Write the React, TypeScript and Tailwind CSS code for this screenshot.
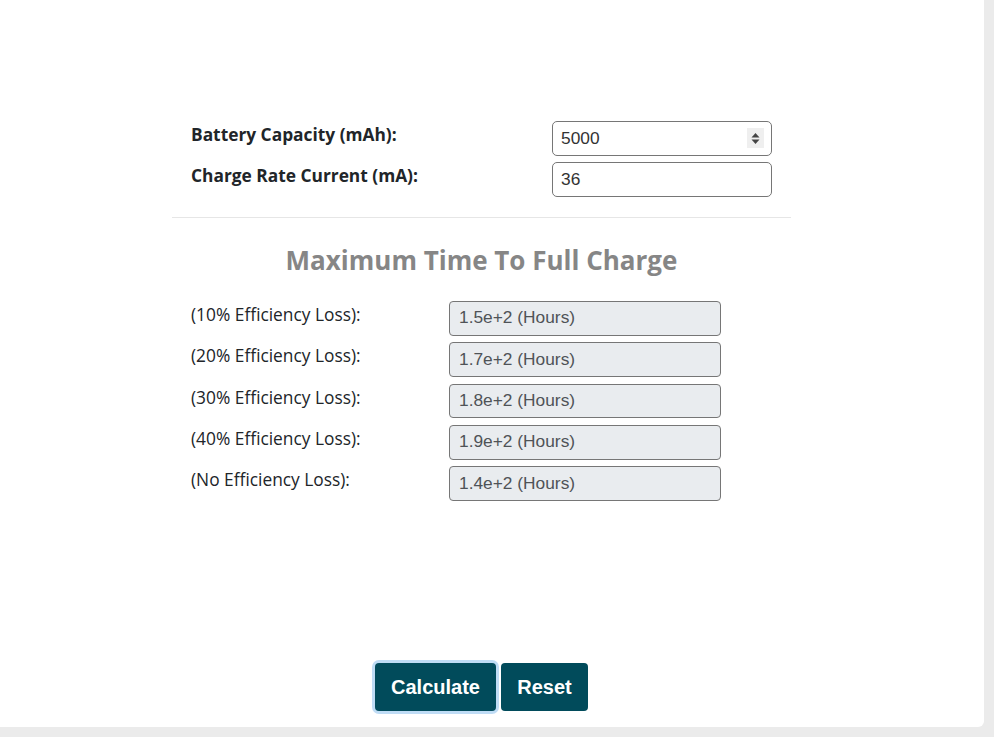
import React, { useState } from "react";

const results = [
  { label: "(10% Efficiency Loss):", value: "1.5e+2 (Hours)" },
  { label: "(20% Efficiency Loss):", value: "1.7e+2 (Hours)" },
  { label: "(30% Efficiency Loss):", value: "1.8e+2 (Hours)" },
  { label: "(40% Efficiency Loss):", value: "1.9e+2 (Hours)" },
  { label: "(No Efficiency Loss):", value: "1.4e+2 (Hours)" },
];

const App: React.FC = () => {
  const [capacity, setCapacity] = useState("5000");
  const [current, setCurrent] = useState("36");

  return (
    <div className="min-h-screen bg-white" style={{ fontFamily: '"Open Sans", "Liberation Sans", sans-serif' }}>
      <div className="w-[994px] h-[737px] bg-[#ebebeb] pr-[10px] pb-[10px]">
        <div className="h-full bg-white rounded-br-[6px] flex flex-col">
          <div className="ml-[172px] w-[619px] pt-[121px] flex flex-col flex-1">
            {/* inputs */}
            <div className="px-[19px] flex flex-col gap-[6.67px]">
              <div className="flex justify-between items-start">
                <label className="font-bold text-[17.33px] leading-[26px] text-[#212529]">Battery Capacity (mAh):</label>
                <div className="relative">
                  <input
                    value={capacity}
                    onChange={(e) => setCapacity(e.target.value)}
                    className="w-[220px] h-[34.67px] border border-[#767676] rounded-[5px] px-[8px] text-[17.33px] text-[#333] bg-white outline-none"
                    style={{ fontFamily: '"Liberation Sans", Arial, sans-serif' }}
                  />
                  <span className="absolute right-[8px] top-[7px] w-[17px] h-[20px] bg-[#efefef] flex items-center justify-center">
                    <svg width="9" height="13" viewBox="0 0 9 13">
                      <path d="M4.5 1 L8.5 5.5 H0.5 Z" fill="#444" />
                      <path d="M4.5 12 L8.5 7.5 H0.5 Z" fill="#444" />
                    </svg>
                  </span>
                </div>
              </div>
              <div className="flex justify-between items-start">
                <label className="font-bold text-[17.33px] leading-[26px] text-[#212529]">Charge Rate Current (mA):</label>
                <input
                  value={current}
                  onChange={(e) => setCurrent(e.target.value)}
                  className="w-[220px] h-[34.67px] border border-[#767676] rounded-[5px] px-[8px] text-[17.33px] text-[#333] bg-white outline-none"
                  style={{ fontFamily: '"Liberation Sans", Arial, sans-serif' }}
                />
              </div>
            </div>

            <div className="mt-[20px] border-t border-[#e6e6e6]" />

            <h2 className="mt-[24px] text-center text-[26px] leading-[36px] font-bold text-[#868686]">
              Maximum Time To Full Charge
            </h2>

            {/* results */}
            <div className="mt-[23px] px-[19px] flex flex-col gap-[6.67px]">
              {results.map((r) => (
                <div key={r.label} className="flex items-start">
                  <span className="w-[258px] text-[17.33px] leading-[26px] text-[#212529]">{r.label}</span>
                  <div
                    className="w-[272px] h-[34.67px] border border-[#767676] rounded-[4px] bg-[#e9ecef] px-[9px] flex items-center text-[17.33px] text-[#4f5357]"
                    style={{ fontFamily: '"Liberation Sans", Arial, sans-serif' }}
                  >
                    {r.value}
                  </div>
                </div>
              ))}
            </div>

            {/* buttons */}
            <div className="mt-auto pb-[16px] flex justify-center gap-[5px]" style={{ fontFamily: '"Liberation Sans", Arial, sans-serif' }}>
              <button className="h-[48px] w-[121px] rounded-[4px] bg-[#014b5b] text-white font-bold text-[20px] ring-[3px] ring-[#bfdcf5]">
                Calculate
              </button>
              <button className="h-[48px] w-[87px] rounded-[4px] bg-[#014b5b] text-white font-bold text-[20px]">
                Reset
              </button>
            </div>
          </div>
        </div>
      </div>
    </div>
  );
};

export default App;
